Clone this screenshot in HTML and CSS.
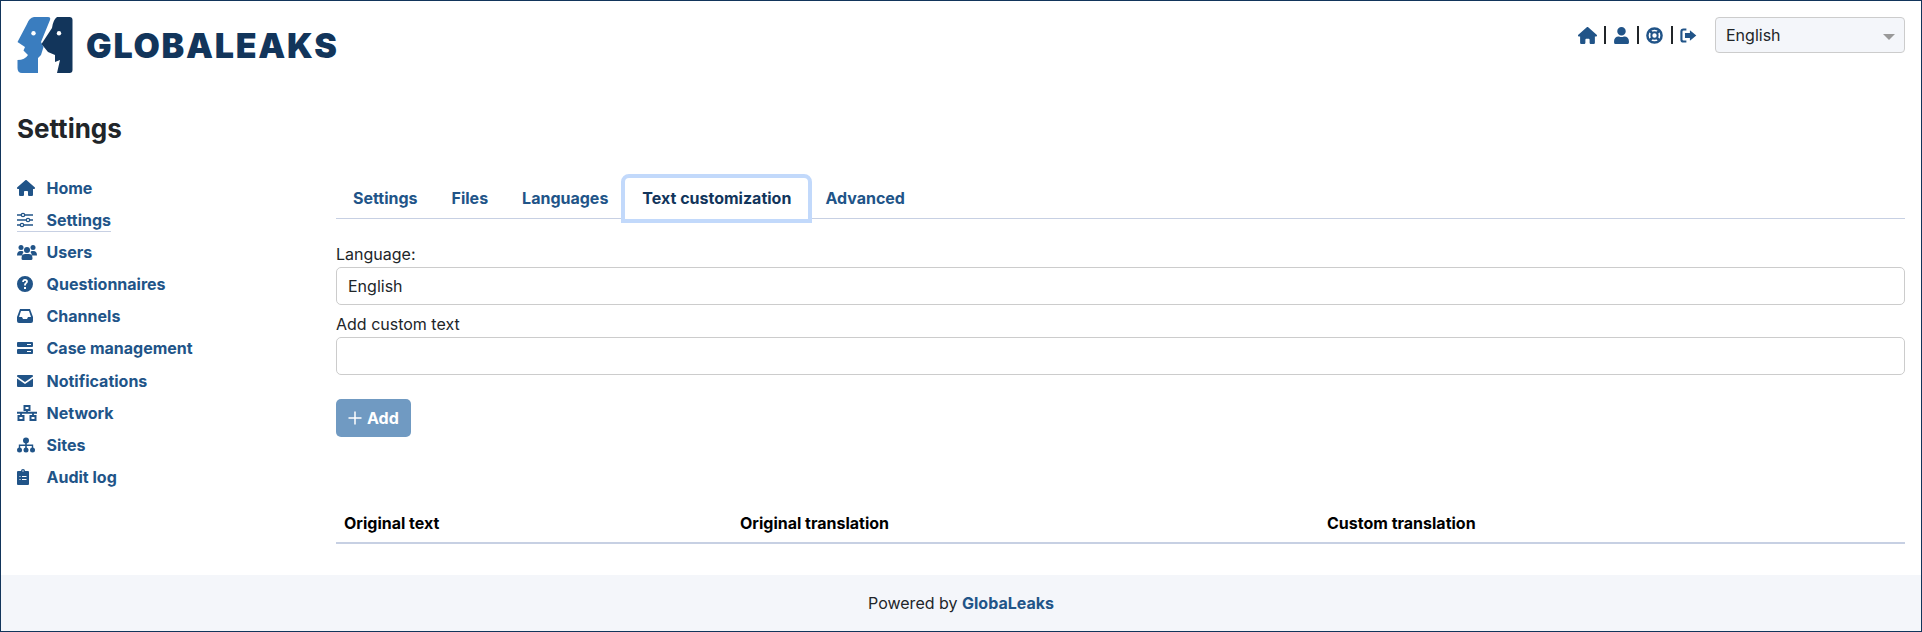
FILE: index.html
```html
<!DOCTYPE html>
<html lang="en">
<head>
    <meta charset="UTF-8">
    <title>GlobaLeaks - Settings</title>
    <link rel="stylesheet" href="styles.css">
</head>
<body>
    <div id="page">
        <header>
            <div class="brand">
                <svg class="logo" viewBox="17 17 56 56">
                    <path fill="#3a7dbf" d="M34 17H48Q51 17 50 20L41 42 43.500 47 41 55 38 58V73H22Q17.500 73 17.500 68V60Q25 60 28 55L23.500 50.500 25 47 17.500 42 27 24Q29 18 34 17Z"/>
                    <path fill="#12355b" d="M57 17H69.500Q72.500 17 72.500 20V70Q72.500 73 69.500 73H57L60 60 55 62 55 55 48 52 41.500 44 52 28Q53 20 57 17Z"/>
                    <circle cx="33.500" cy="33.300" r="2.200" fill="#fff"/>
                    <circle cx="59" cy="33.300" r="2.200" fill="#fff"/>
                </svg>
                <span class="brand-name">GLOBALEAKS</span>
            </div>
            <div class="top-right">
                <svg class="top-icon" viewBox="0 0 576 512"><path d="M575.800 255.500c0 18-15 32.100-32 32.100h-32l.7 160.200c0 2.700-.2 5.400-.5 8.100V472c0 22.100-17.900 40-40 40H456c-1.100 0-2.200 0-3.300-.1-1.400 .1-2.800 .1-4.200 .1H392c-22.100 0-40-17.900-40-40V384c0-17.700-14.300-32-32-32H256c-17.700 0-32 14.300-32 32v88c0 22.100-17.900 40-40 40H128.100c-1.500 0-3-.1-4.500-.2-1.200 .1-2.400 .2-3.600 .2H104c-22.100 0-40-17.900-40-40V360c0-.9 0-1.900 .1-2.800V287.600H32c-18 0-32-14-32-32.100 0-9 3-17 10-24L266.400 8c7-7 15-8 22-8s15 2 21 7L564.800 231.500c8 7 12 15 11 24z"/></svg>
                <span class="sep"></span>
                <svg class="top-icon" viewBox="0 0 448 512"><path d="M224 256c70.700 0 128-57.300 128-128S294.700 0 224 0 96 57.300 96 128s57.300 128 128 128zm89.600 32h-16.700c-22.200 10.200-46.900 16-72.900 16s-50.600-5.800-72.900-16h-16.700C60.200 288 0 348.200 0 422.400V464c0 26.500 21.500 48 48 48h352c26.500 0 48-21.500 48-48v-41.600c0-74.200-60.200-134.400-134.400-134.400z"/></svg>
                <span class="sep"></span>
                <svg class="top-icon" viewBox="0 0 24 24"><circle cx="12" cy="12" r="10" fill="none" stroke="#215488" stroke-width="3.500"/><circle cx="12" cy="12" r="4.500" fill="none" stroke="#215488" stroke-width="2.800"/><path d="M5 5l4 4M19 5l-4 4M5 19l4-4M19 19l-4-4" stroke="#215488" stroke-width="3.800"/></svg>
                <span class="sep"></span>
                <svg class="top-icon" viewBox="0 0 24 24"><path d="M9 3.500H5Q2 3.500 2 6.500V17.500Q2 20.500 5 20.500H9" fill="none" stroke="#215488" stroke-width="3"/><path d="M14 4.500 23 12 14 19.500V15.500H7V8.500H14Z"/></svg>
                <div class="lang-select">English<span class="caret"></span></div>
            </div>
        </header>
        <h1>Settings</h1>
        <div class="main">
            <nav class="sidebar">
                <a href="#"><svg preserveAspectRatio="xMinYMid meet" viewBox="0 0 576 512"><path d="M575.800 255.500c0 18-15 32.100-32 32.100h-32l.7 160.200c0 2.700-.2 5.400-.5 8.100V472c0 22.100-17.900 40-40 40H456c-1.100 0-2.200 0-3.300-.1-1.400 .1-2.800 .1-4.200 .1H392c-22.100 0-40-17.900-40-40V384c0-17.700-14.300-32-32-32H256c-17.700 0-32 14.300-32 32v88c0 22.100-17.900 40-40 40H128.100c-1.500 0-3-.1-4.500-.2-1.200 .1-2.400 .2-3.600 .2H104c-22.100 0-40-17.900-40-40V360c0-.9 0-1.900 .1-2.800V287.600H32c-18 0-32-14-32-32.100 0-9 3-17 10-24L266.400 8c7-7 15-8 22-8s15 2 21 7L564.800 231.500c8 7 12 15 11 24z"/></svg>Home</a>
                <a href="#" class="active"><svg preserveAspectRatio="xMinYMid meet" viewBox="0 -1 16 16"><path d="M0 2H16M0 7H16M0 12H16" stroke="#215488" stroke-width="1.400"/><circle cx="6" cy="2" r="1.700" fill="#fff" stroke="#215488" stroke-width="1.200"/><circle cx="11" cy="7" r="1.700" fill="#fff" stroke="#215488" stroke-width="1.200"/><circle cx="5" cy="12" r="1.700" fill="#fff" stroke="#215488" stroke-width="1.200"/></svg>Settings</a>
                <a href="#"><svg preserveAspectRatio="xMinYMid meet" viewBox="0 0 20 16"><circle cx="4" cy="3.500" r="2.500"/><circle cx="16" cy="3.500" r="2.500"/><circle cx="10" cy="6" r="3"/><path d="M0 11.500Q0 7 3.500 7H5Q6 7 6.500 8 5 10 5.500 11.500H0ZM20 11.500Q20 7 16.500 7H15Q14 7 13.500 8 15 10 14.500 11.500H20ZM4.500 14.500Q4.500 10 8 10H12Q15.500 10 15.500 14.500 15.500 16 14 16H6Q4.500 16 4.500 14.500Z"/></svg>Users</a>
                <a href="#"><svg preserveAspectRatio="xMinYMid meet" viewBox="0 0 16 16"><path fill-rule="evenodd" d="M8 0a8 8 0 1 0 0 16A8 8 0 0 0 8 0ZM7 11h2v2H7ZM5.200 6Q5.300 3 8 3 10.900 3 10.900 5.500 10.900 7 9.500 7.800 9 8.100 9 9.500H7Q7 7.400 8.200 6.800 9 6.400 9 5.600 9 4.700 8 4.700 7 4.700 6.900 6Z"/></svg>Questionnaires</a>
                <a href="#"><svg preserveAspectRatio="xMinYMid meet" viewBox="0 -1 16 16"><path fill-rule="evenodd" d="M3 0H13L16 8V12Q16 14 14 14H2Q0 14 0 12V8ZM4 2 2 8H5L6 10H10L11 8H14L12 2Z"/></svg>Channels</a>
                <a href="#"><svg preserveAspectRatio="xMinYMid meet" viewBox="0 -2 16 16"><path fill-rule="evenodd" d="M1 0H15Q16 0 16 1V4Q16 5 15 5H1Q0 5 0 4V1Q0 0 1 0ZM10 2V3H14V2ZM1 7H15Q16 7 16 8V11Q16 12 15 12H1Q0 12 0 11V8Q0 7 1 7ZM10 9V10H14V9Z"/></svg>Case management</a>
                <a href="#"><svg preserveAspectRatio="xMinYMid meet" viewBox="0 -2 16 16"><path d="M1 0H15Q16 0 16 1V1.500L8 7 0 1.500V1Q0 0 1 0ZM0 3.500 8 9 16 3.500V11Q16 12 15 12H1Q0 12 0 11Z"/></svg>Notifications</a>
                <a href="#"><svg preserveAspectRatio="xMinYMid meet" viewBox="0 0 20 16"><path fill-rule="evenodd" d="M6.500 0H13.500V6H10.900V6.800H20V8.800H16.900V10H19.500V16H12.500V10H15.100V8.800H4.900V10H7.500V16H.5V10H3.100V8.800H0V6.800H9.100V6H6.500ZM8.500 2V4H11.500V2ZM2.500 12V14H5.500V12ZM14.500 12V14H17.500V12Z"/></svg>Network</a>
                <a href="#"><svg preserveAspectRatio="xMinYMid meet" viewBox="0 -.5 18 16"><circle cx="9" cy="3" r="3"/><circle cx="2.500" cy="12.500" r="2.500"/><circle cx="9" cy="12.500" r="2.500"/><circle cx="15.500" cy="12.500" r="2.500"/><path d="M8.200 5H9.800V7H16.200V11H14.800V8.500H9.800V11H8.200V8.500H3.200V11H1.800V7H8.200Z"/></svg>Sites</a>
                <a href="#"><svg preserveAspectRatio="xMinYMid meet" viewBox="0 0 12 16"><path fill-rule="evenodd" d="M4 2Q4 0 6 0 8 0 8 2H11Q12 2 12 3V15Q12 16 11 16H1Q0 16 0 15V3Q0 2 1 2ZM5.300 2Q5.300 2.700 6 2.700 6.700 2.700 6.700 2 6.700 1.300 6 1.300 5.300 1.300 5.300 2ZM2.500 7V8H3.500V7ZM5 7V8H9.500V7ZM2.500 10V11H3.500V10ZM5 10V11H9.500V10Z"/></svg>Audit log</a>
            </nav>
            <main class="content">
                <ul class="tabs">
                    <li><a href="#">Settings</a></li>
                    <li><a href="#">Files</a></li>
                    <li><a href="#">Languages</a></li>
                    <li class="current"><a href="#">Text customization</a></li>
                    <li><a href="#">Advanced</a></li>
                </ul>
                <div class="field">
                    <label>Language:</label>
                    <div class="input">English</div>
                </div>
                <div class="field">
                    <label>Add custom text</label>
                    <div class="input"></div>
                </div>
                <button class="add-btn"><svg viewBox="0 0 14 14"><path d="M7 0.500V13.500M0.500 7H13.500" stroke="#fff" stroke-width="1.500"/></svg>Add</button>
                <div class="table-head">
                    <div>Original text</div>
                    <div>Original translation</div>
                    <div>Custom translation</div>
                </div>
            </main>
        </div>
        <footer>Powered by <a href="#">GlobaLeaks</a></footer>
    </div>
</body>
</html>
```

FILE: styles.css
```css
html, body {
    margin: 0;
    padding: 0;
    height: 100%;
}
body {
    font-family: 'Inter', sans-serif;
    font-size: 16px;
    color: #212529;
    background-color: #fff;
}
a {
    color: #215488;
    text-decoration: none;
    font-weight: 700;
}
#page {
    box-sizing: border-box;
    height: 632px;
    border: 1px solid #12355b;
    display: flex;
    flex-direction: column;
}
header {
    display: flex;
    justify-content: space-between;
    align-items: flex-start;
    padding: 16px 16px 0;
    height: 56px;
}
.brand {
    display: flex;
    align-items: center;
}
.logo {
    width: 56px;
    height: 56px;
}
.brand-name {
    font-weight: 900;
    font-size: 34px;
    letter-spacing: 1.75px;
    color: #12355b;
    margin-left: 13px;
}
.top-right {
    display: flex;
    align-items: center;
    height: 36px;
}
.top-icon {
    height: 17px;
    width: 19px;
    fill: #215488;
}
.sep {
    width: 2px;
    height: 18px;
    background-color: #212529;
    margin: 0 6.3px;
}
.lang-select {
    position: relative;
    box-sizing: border-box;
    width: 190px;
    height: 36px;
    line-height: 34px;
    margin-left: 17px;
    padding-left: 10px;
    background-color: #f4f6fa;
    border: 1px solid #ccc;
    border-radius: 4px;
}
.caret {
    position: absolute;
    right: 9px;
    top: 16px;
    border-left: 6px solid transparent;
    border-right: 6px solid transparent;
    border-top: 6px solid #999;
}
h1 {
    margin: 41px 0 0 16px;
    font-size: 26px;
    font-weight: 700;
    line-height: 29px;
}
.main {
    display: flex;
    flex: 1;
    padding: 0 16px;
}
.sidebar {
    width: 319px;
    flex: none;
    padding-top: 33px;
}
.sidebar a {
    display: flex;
    align-items: center;
    width: max-content;
    height: 24px;
    margin-bottom: 8.1px;
}
.sidebar svg {
    width: 20px;
    height: 16px;
    margin-right: 9.5px;
    fill: #215488;
}
.sidebar a.active {
    border-bottom: 1px solid #c7d0e3;
    height: 23px;
}
.content {
    flex: 1;
    padding-top: 35px;
}
.tabs {
    display: flex;
    list-style: none;
    margin: 0 0 24px;
    padding: 0;
    height: 40px;
    border-bottom: 1px solid #c7d0e3;
}
.tabs li a {
    display: block;
    padding: 0 17px;
    line-height: 40px;
}
.tabs li.current a {
    height: 41px;
    color: #12355b;
    background-color: #fff;
    outline: 4px solid #c2d9fb;
    border-radius: 4px 4px 0 0;
}
.field label {
    display: block;
    line-height: 22px;
    margin-bottom: 2px;
}
.input {
    box-sizing: border-box;
    height: 38px;
    line-height: 36px;
    padding: 0 11px;
    border: 1px solid #ccc;
    border-radius: 5px;
    margin-bottom: 8px;
}
.add-btn {
    display: flex;
    align-items: center;
    height: 38px;
    margin-top: 24px;
    padding: 0 12px;
    border: none;
    border-radius: 5px;
    background-color: #709ac2;
    color: #fff;
    font-family: inherit;
    font-size: 16px;
    font-weight: 700;
}
.add-btn svg {
    width: 14px;
    height: 14px;
    margin-right: 5px;
}
.table-head {
    display: grid;
    grid-template-columns: 396px 587px 1fr;
    margin-top: 72px;
    padding: 0 8px;
    height: 33px;
    line-height: 28px;
    color: #000;
    font-weight: 700;
    border-bottom: 2px solid #c7d0e3;
}
footer {
    height: 56px;
    line-height: 57px;
    text-align: center;
    background-color: #f4f6fa;
}
```
